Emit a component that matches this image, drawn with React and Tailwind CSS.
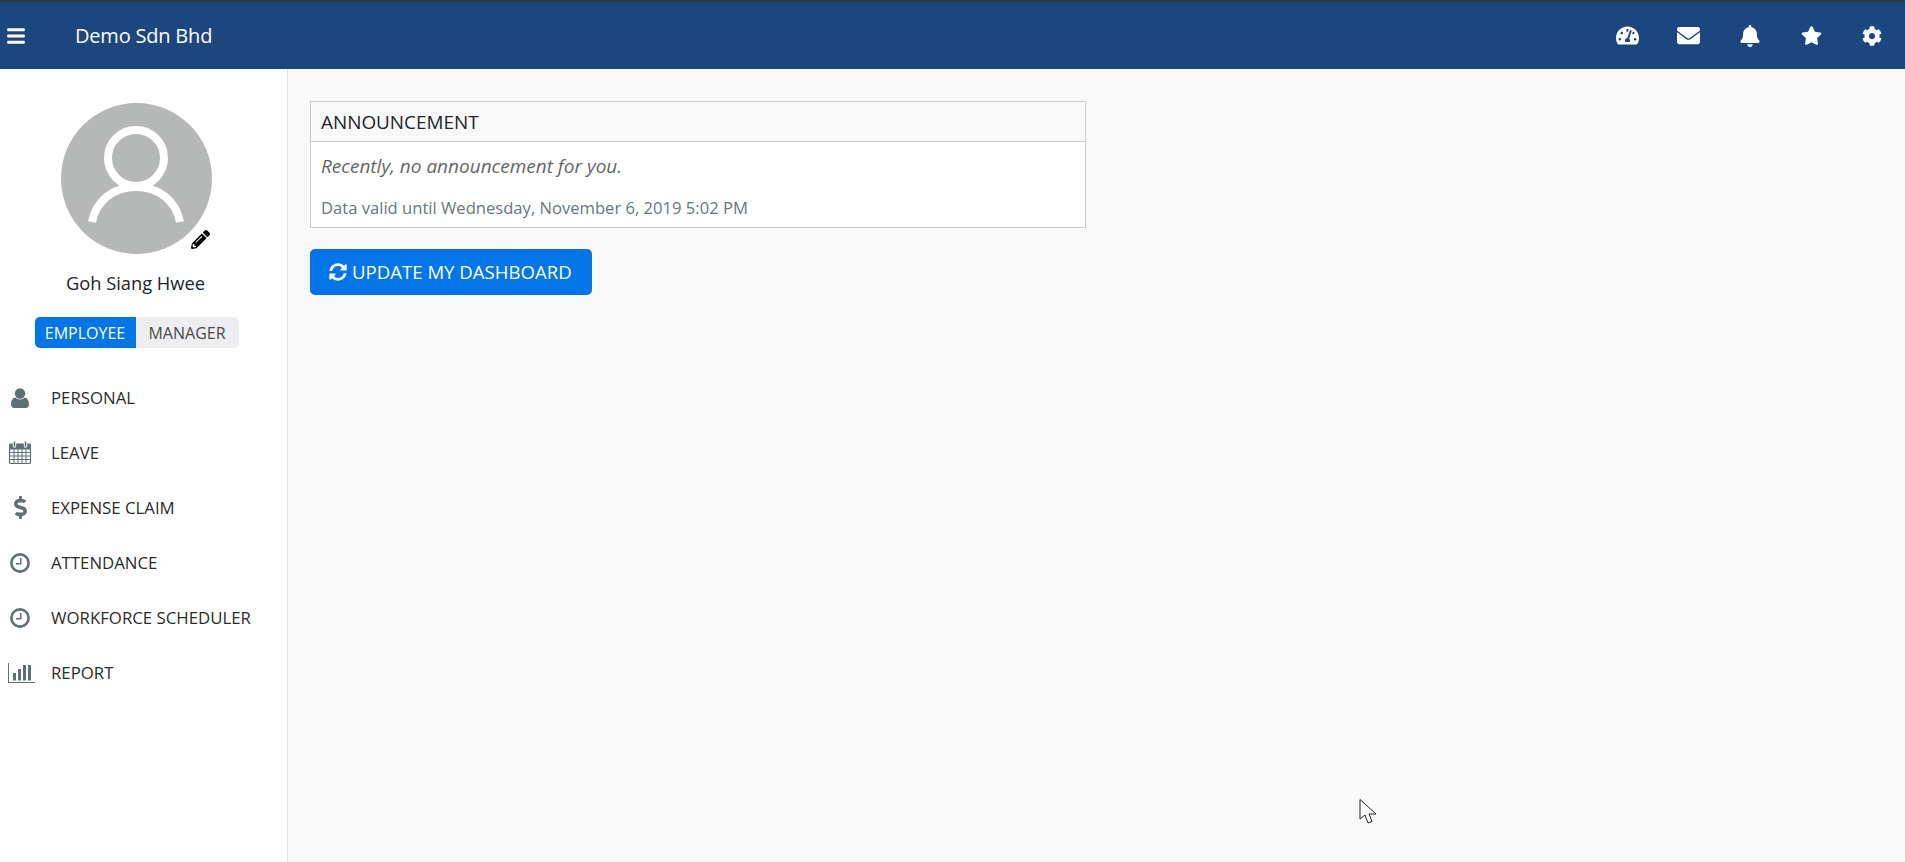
import React from "react";
import {
  FaBars, FaBell, FaCog, FaDollarSign, FaEnvelope, FaPencilAlt,
  FaStar, FaSyncAlt, FaTachometerAlt,
} from "react-icons/fa";

const font = "font-['Open_Sans','Noto_Sans',sans-serif]";

const topIcons = [
  { Icon: FaTachometerAlt, size: 23 },
  { Icon: FaEnvelope, size: 23 },
  { Icon: FaBell, size: 22 },
  { Icon: FaStar, size: 21 },
  { Icon: FaCog, size: 20 },
];

function UserIcon() {
  return (
    <svg viewBox="0 0 18 20" className="w-[18px] h-[20px]" fill="currentColor">
      <circle cx="9" cy="5.5" r="5.2" />
      <path d="M4.2 9.5 C6.5 12 11.5 12 13.8 9.5 C16.6 10 18 12.5 18 16.5 C18 18.8 16.6 20 14.8 20 H3.2 C1.4 20 0 18.8 0 16.5 C0 12.5 1.4 10 4.2 9.5 Z" />
    </svg>
  );
}

function CalendarIcon() {
  return (
    <svg viewBox="0 0 22 23" className="w-[22px] h-[23px]" fill="none" stroke="currentColor" strokeWidth="1">
      <rect x="0.5" y="3" width="21" height="19.5" rx="1.5" strokeWidth="1.2" />
      <path d="M0.5 3.5 H21.5 V8 H0.5 Z" fill="currentColor" />
      <path d="M0.5 11.5 H21.5 M0.5 15 H21.5 M0.5 18.5 H21.5 M5 8 V22 M9 8 V22 M13 8 V22 M17 8 V22" />
      <path d="M5.5 1 V5 M16.5 1 V5" stroke="#fff" strokeWidth="3.4" strokeLinecap="round" />
      <path d="M5.5 1 V5 M16.5 1 V5" strokeWidth="1.6" strokeLinecap="round" />
    </svg>
  );
}

function ClockIcon() {
  return (
    <svg viewBox="0 0 20 20" className="w-[20px] h-[20px]" fill="none" stroke="currentColor">
      <circle cx="10" cy="10" r="8.6" strokeWidth="2.6" />
      <path d="M10.8 5 V10.8 H6" strokeWidth="1.5" />
    </svg>
  );
}

function ChartIcon() {
  return (
    <svg viewBox="0 0 27 20" className="w-[27px] h-[20px] ml-[2px]" fill="currentColor">
      <path d="M0 0 H1 V19 H27 V20 H0 Z" />
      <rect x="5" y="10" width="3" height="7.5" />
      <rect x="10" y="6" width="3" height="11.5" />
      <rect x="15" y="2" width="3" height="15.5" />
      <rect x="20" y="2" width="3" height="15.5" />
    </svg>
  );
}

const navItems = [
  { label: "PERSONAL", icon: <UserIcon /> },
  { label: "LEAVE", icon: <CalendarIcon /> },
  { label: "EXPENSE CLAIM", icon: <FaDollarSign size={23} /> },
  { label: "ATTENDANCE", icon: <ClockIcon /> },
  { label: "WORKFORCE SCHEDULER", icon: <ClockIcon /> },
  { label: "REPORT", icon: <ChartIcon /> },
];

function Avatar() {
  return (
    <div className="relative w-[151px] h-[151px] rounded-full bg-[#b6b8b7]">
      <svg viewBox="0 0 151 151" className="w-full h-full" fill="none" stroke="#fff" strokeWidth="8">
        <circle cx="75" cy="55" r="28" />
        <path d="M31 119 C35 98 52 84 75 84 C98 84 115 98 119 119" />
      </svg>
      <FaPencilAlt size={19} className="absolute right-[2px] bottom-[5px] text-black" />
    </div>
  );
}

export default function App() {
  return (
    <div className={`${font} relative flex flex-col h-[862px] overflow-hidden bg-[#f9f9f9]`}>
      <header className="flex items-center h-[69px] shrink-0 border-t-2 border-[#2e3742] bg-[#1c477e] text-white">
        <FaBars size={20} className="ml-[6px]" />
        <span className="ml-[49px] text-[20px] tracking-[-0.2px]">Demo Sdn Bhd</span>
        <div className="ml-auto flex items-center mr-[2px]">
          {topIcons.map(({ Icon, size }, i) => (
            <div key={i} className="flex items-center justify-center w-[61.5px]">
              <Icon size={size} className={i === 4 ? "" : "ml-[2px]"} />
            </div>
          ))}
        </div>
      </header>

      <div className="flex flex-1 min-h-0">
        <aside className="w-[288px] shrink-0 border-r border-[#e2e2e2] bg-white">
          <div className="flex flex-col items-center pt-[34px] pr-[14px]">
            <div className="mr-[1px]">
              <Avatar />
            </div>
            <div className="mt-[15px] mr-[2px] text-[18.3px] leading-[28px] text-[#212529]">Goh Siang Hwee</div>
            <div className="flex mt-[20px] h-[31px] text-[16px]">
              <div className="flex items-center justify-center w-[101px] rounded-l-[5px] bg-[#0275e8] text-white">EMPLOYEE</div>
              <div className="flex items-center justify-center w-[103px] rounded-r-[5px] bg-[#eeeef0] text-[#4a4a4a]">MANAGER</div>
            </div>
          </div>
          <nav className="mt-[22px]">
            {navItems.map(({ label, icon }) => (
              <div key={label} className="flex items-center h-[55px]">
                <div className="flex items-center justify-center w-[40px] text-[#5f7073]">
                  {icon}
                </div>
                <span className="ml-[11px] text-[16.8px] text-[#2b2b2b]">{label}</span>
              </div>
            ))}
          </nav>
        </aside>

        <main className="flex-1 pt-[32px] pl-[22px]">
          <section className="w-[776px] border border-[#cccccc] bg-white">
            <h2 className="flex items-center h-[40px] pt-[1px] px-[10px] border-b border-[#cccccc] bg-[#f9f9f9] text-[18.9px] font-normal text-[#212529]">
              ANNOUNCEMENT
            </h2>
            <p className="pt-[10px] px-[10px] text-[19px] leading-[28px] italic text-[#666666]">
              Recently, no announcement for you.
            </p>
            <p className="mt-[15px] mb-[7px] px-[10px] text-[16.6px] leading-[25px] text-[#6c757d]">
              Data valid until Wednesday, November 6, 2019 5:02 PM
            </p>
          </section>
          <button className="flex items-center gap-[5px] mt-[21px] h-[46px] w-[282px] pl-[19px] rounded-[5px] bg-[#0275e8] text-[18.6px] text-white">
            <FaSyncAlt size={18} />
            UPDATE MY DASHBOARD
          </button>
        </main>
      </div>

      {/* mouse pointer caught in the screenshot */}
      <svg viewBox="0 0 20 28" className="absolute left-[1358px] top-[798px] w-[20px] h-[28px]" fill="#fff" stroke="#222" strokeWidth="1">
        <path d="M2 1.5 V21 L7 17 L10 25 L14 23.5 L11 16 L18 16 Z" />
      </svg>
    </div>
  );
}
